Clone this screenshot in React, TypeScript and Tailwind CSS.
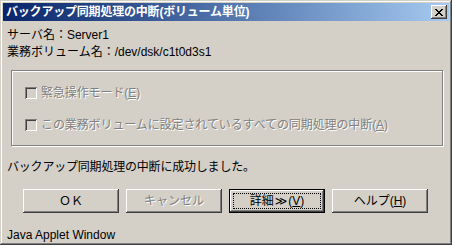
import type { ReactNode } from 'react'

const font = 'font-["Liberation_Sans","Noto_Sans_CJK_JP",sans-serif]'

// raised 3D edge used by buttons
const raised =
  'shadow-[inset_-1px_-1px_0_#404040,inset_1px_1px_0_#ffffff,inset_-2px_-2px_0_#808080,inset_2px_2px_0_#d4d0c8]'

function Mnemonic({ ch }: { ch: string }) {
  return (
    <>
      (<span className="underline underline-offset-1">{ch}</span>)
    </>
  )
}

function DisabledCheck({ children }: { children: ReactNode }) {
  return (
    <div className="flex h-[17px] items-center gap-[4px]">
      <div className="h-[12px] w-[12px] bg-[#d4d0c8] shadow-[inset_1px_1px_0_#808080,inset_-1px_-1px_0_#ffffff,inset_2px_2px_0_#404040,inset_-2px_-2px_0_#d4d0c8]" />
      <span className="text-[12px] tracking-[-0.1px] text-[#808080] [text-shadow:1px_1px_0_#ffffff]">
        {children}
      </span>
    </div>
  )
}

function Button({
  children,
  disabled,
  isDefault,
}: {
  children: ReactNode
  disabled?: boolean
  isDefault?: boolean
}) {
  return (
    <div
      className={`relative flex h-[24px] w-[96px] items-center justify-center bg-[#d4d0c8] text-[12px] ${
        isDefault ? 'border border-black' : ''
      }`}
    >
      <div className={`absolute inset-0 ${raised}`} />
      {isDefault && <div className="absolute inset-[3px] border border-dotted border-black" />}
      <span
        className={`relative ${
          disabled ? 'text-[#808080] [text-shadow:1px_1px_0_#ffffff]' : 'text-black'
        }`}
      >
        {children}
      </span>
    </div>
  )
}

export default function App() {
  return (
    <div
      className={`${font} flex h-[245px] w-[452px] flex-col bg-[#d4d0c8] p-[3px] text-black shadow-[inset_-1px_-1px_0_#404040,inset_1px_1px_0_#d4d0c8,inset_-2px_-2px_0_#808080,inset_2px_2px_0_#ffffff]`}
    >
      {/* title bar */}
      <div className="flex h-[18px] items-center justify-between bg-linear-to-r from-[#0a246a] to-[#a6caf0] pl-[3px] pr-[2px]">
        <span className="text-[12px] font-bold tracking-[-0.2px] text-white">
          バックアップ同期処理の中断(ボリューム単位)
        </span>
        <div className={`flex h-[14px] w-[16px] items-center justify-center bg-[#d4d0c8] ${raised}`}>
          <svg width="8" height="7" viewBox="0 0 8 7" shapeRendering="crispEdges">
            <path d="M0 0h2v1h-2zM6 0h2v1h-2zM1 1h2v1h-2zM5 1h2v1h-2zM2 2h4v1h-4zM3 3h2v1h-2zM2 4h4v1h-4zM1 5h2v1h-2zM5 5h2v1h-2zM0 6h2v1h-2zM6 6h2v1h-2z" fill="#000" />
          </svg>
        </div>
      </div>

      <div className="flex flex-1 flex-col pl-[4px] pr-[6px]">
        <div className="mt-[6px] text-[12px] leading-[17px]">
          <div>サーバ名：Server1</div>
          <div>業務ボリューム名：/dev/dsk/c1t0d3s1</div>
        </div>

        <div className="ml-[4px] mt-[9px] flex flex-col gap-[15px] border border-[#808080] pb-[12px] pl-[13px] pt-[13px] shadow-[1px_1px_0_#ffffff,inset_1px_1px_0_#ffffff]">
          <DisabledCheck>
            緊急操作モード<Mnemonic ch="E" />
          </DisabledCheck>
          <DisabledCheck>
            この業務ボリュームに設定されているすべての同期処理の中断<Mnemonic ch="A" />
          </DisabledCheck>
        </div>

        <div className="mt-[13px] text-[12px] leading-[17px] tracking-[-0.2px]">
          バックアップ同期処理の中断に成功しました。
        </div>

        <div className="ml-[16px] mt-[13px] flex gap-[7px]">
          <Button>ＯＫ</Button>
          <Button disabled>キャンセル</Button>
          <Button isDefault>
            詳細<span className='px-[1px] font-["DejaVu_Sans",sans-serif]'>≫</span>
            <Mnemonic ch="V" />
          </Button>
          <Button>
            ヘルプ<Mnemonic ch="H" />
          </Button>
        </div>

        <div className="mt-[14px] text-[12px] leading-[17px]">Java Applet Window</div>
      </div>
    </div>
  )
}
